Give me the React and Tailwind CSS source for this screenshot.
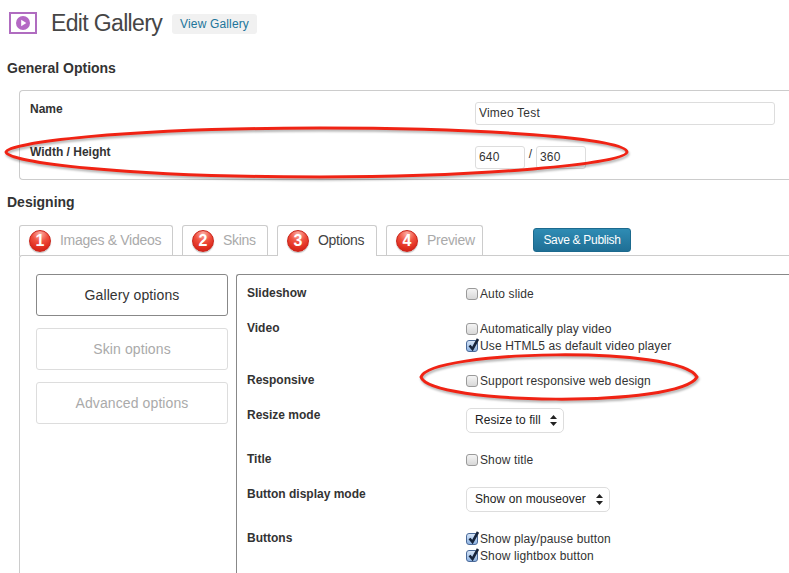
import React from 'react';

const tabs = [
    { n: 1, label: 'Images & Videos', width: 'w-[154px]' },
    { n: 2, label: 'Skins', width: 'w-[86px]' },
    { n: 3, label: 'Options', width: 'w-[100px]', active: true },
    { n: 4, label: 'Preview', width: 'w-[97px]' },
];

function Badge({ n }) {
    return (
        <span className="flex h-[22px] w-[22px] shrink-0 items-center justify-center rounded-full border border-[#c9241a] bg-[radial-gradient(circle_at_50%_15%,#fbb0a6_0%,#f0503f_40%,#dd2a1c_75%,#c8201a_100%)] text-[16px] font-bold text-white shadow-[0_1px_1px_rgba(0,0,0,0.25)]">
            {n}
        </span>
    );
}

function Checkbox({ checked, label }) {
    return (
        <div className="flex h-[17px] items-center text-xs tracking-[0.12px] text-[#333]">
            <span className="relative mr-[2px] h-[12px] w-[12px] shrink-0 rounded-[3px] border border-[#9a9a9a] bg-gradient-to-b from-[#f4f4f4] to-[#d8d8d8] data-[on=true]:border-[#4a6a9a] data-[on=true]:from-[#d5e4f7] data-[on=true]:to-[#8fb4e2]" data-on={checked ? 'true' : 'false'}>
                {checked && (
                    <svg className="absolute -top-[4px] left-0 h-[14px] w-[13px]" viewBox="0 0 13 14">
                        <path d="M2.5 8.5 L5.5 12 L11 2" fill="none" stroke="#16243c" strokeWidth="2.6" />
                    </svg>
                )}
            </span>
            {label}
        </div>
    );
}

function Select({ label, width }) {
    return (
        <div className={`flex h-[25px] items-center justify-between rounded-[5px] border border-[#ddd] pb-px pl-[8px] pr-[6px] text-xs tracking-[0.08px] text-[#222] ${width}`}>
            {label}
            <svg className="h-[11px] w-[7px]" viewBox="0 0 7 11">
                <path d="M3.5 0 L7 4 H0 Z M3.5 11 L0 7 H7 Z" fill="#222" />
            </svg>
        </div>
    );
}

function Row({ label, tall, children }) {
    return (
        <div className={`flex ${tall ? 'h-[27px]' : ''}`}>
            <div className="h-[14px] w-[219px] shrink-0 pt-px text-xs leading-[14px] font-bold text-[#333]">{label}</div>
            <div className={tall ? 'pt-px' : 'pb-px'}>{children}</div>
        </div>
    );
}

function App() {
    return (
        <div className="relative h-[573px] w-[789px] overflow-hidden bg-white font-['Liberation_Sans',Arial,sans-serif]">
            {/* Page title */}
            <div className="flex h-[46px] items-center pl-[9px]">
                <span className="flex h-[22px] w-[28px] items-center justify-center border-[2px] border-[#b06cc0]">
                    <svg className="h-[14px] w-[14px]" viewBox="0 0 14 14">
                        <circle cx="7" cy="7" r="7" fill="#b468c4" />
                        <path d="M5.2 3.8 L10.3 7 L5.2 10.2 Z" fill="#fff" />
                    </svg>
                </span>
                <h1 className="ml-[14px] text-[23px] tracking-[-0.65px] text-[#464646]">Edit Gallery</h1>
                <span className="ml-[10px] mt-[2px] flex h-[20px] items-center rounded-[3px] bg-[#f1f1f1] px-[8px] text-xs tracking-[0.15px] text-[#21759b]">View Gallery</span>
            </div>

            <h2 className="ml-[7px] mt-[14px] h-[16px] text-sm leading-[16px] font-bold text-[#333]">General Options</h2>

            <div className="ml-[19px] mt-[14px] h-[90px] rounded-l-[4px] border-y border-l border-[#ccc] pl-[10px]">
                <div className="flex pt-[11px]">
                    <div className="h-[14px] w-[445px] text-xs leading-[14px] font-bold text-[#333]">Name</div>
                    <input readOnly value="Vimeo Test" className="h-[23px] w-[300px] rounded-[3px] border border-[#ddd] px-[3px] pb-[2px] text-xs tracking-[0.2px] text-[#333]" />
                </div>
                <div className="flex pt-[20px]">
                    <div className="h-[14px] w-[445px] text-xs leading-[14px] font-bold text-[#333]">Width / Height</div>
                    <div className="mt-px flex h-[23px] text-xs tracking-[0.2px] text-[#333]">
                        <input readOnly value="640" className="w-[50px] rounded-[3px] border border-[#ddd] px-[3px] pb-[2px]" />
                        <span className="w-[11px] text-center">/</span>
                        <input readOnly value="360" className="w-[50px] rounded-[3px] border border-[#ddd] px-[3px] pb-[2px]" />
                    </div>
                </div>
            </div>

            <h2 className="ml-[7px] mt-[14px] h-[16px] text-sm leading-[16px] font-bold text-[#333]">Designing</h2>

            {/* Tabs */}
            <div className="ml-[19px] mt-[15px] flex h-[31px] items-start">
                {tabs.map((tab) => (
                    <div
                        key={tab.n}
                        className={`mr-[9px] flex h-[31px] items-center rounded-t-[3px] border-x border-t border-[#ccc] pl-[9px] text-sm ${tab.width} ${tab.active ? 'relative z-10 bg-white text-[#444]' : 'text-[#aaa]'}`}
                    >
                        <Badge n={tab.n} />
                        <span className="-mt-[2px] ml-[9px] tracking-[-0.3px]">{tab.label}</span>
                    </div>
                ))}
                <button className="ml-[41px] mt-[3px] h-[24px] w-[98px] rounded-[3px] border border-[#1c6a8e] bg-gradient-to-b from-[#2f8cb4] to-[#1f6f95] text-xs font-medium tracking-[-0.3px] text-white">
                    Save &amp; Publish
                </button>
            </div>

            {/* Tab content */}
            <div className="-mt-px ml-[19px] flex h-[400px] rounded-tl-[3px] border-l border-t border-[#ccc] pl-[16px] pt-[18px]">
                <div className="flex w-[192px] shrink-0 flex-col gap-[12px] tracking-[0.1px]">
                    <div className="flex h-[42px] items-center justify-center rounded-[3px] border border-[#888] text-sm text-[#333]">Gallery options</div>
                    <div className="flex h-[42px] items-center justify-center rounded-[3px] border border-[#ddd] text-sm text-[#aaa]">Skin options</div>
                    <div className="flex h-[42px] items-center justify-center rounded-[3px] border border-[#ddd] text-sm text-[#aaa]">Advanced options</div>
                </div>
                <div className="ml-[8px] flex flex-1 flex-col gap-[17px] rounded-tl-[3px] border-l border-t border-[#888] pl-[10px] pt-[10px]">
                    <Row label="Slideshow">
                        <Checkbox label="Auto slide" />
                    </Row>
                    <Row label="Video">
                        <Checkbox label="Automatically play video" />
                        <Checkbox checked label="Use HTML5 as default video player" />
                    </Row>
                    <Row label="Responsive">
                        <Checkbox label="Support responsive web design" />
                    </Row>
                    <Row label="Resize mode" tall>
                        <Select label="Resize to fill" width="w-[98px]" />
                    </Row>
                    <Row label="Title">
                        <Checkbox label="Show title" />
                    </Row>
                    <Row label="Button display mode" tall>
                        <Select label="Show on mouseover" width="w-[144px]" />
                    </Row>
                    <Row label="Buttons">
                        <Checkbox checked label="Show play/pause button" />
                        <Checkbox checked label="Show lightbox button" />
                    </Row>
                </div>
            </div>

            {/* Red marker annotations */}
            <svg className="pointer-events-none absolute inset-0 z-20 h-[573px] w-[789px] drop-shadow-[1px_2px_1px_rgba(0,0,0,0.3)]" viewBox="0 0 789 573">
                <path d="M6 152 C8 143 120 128 320 128 C480 128 626 138 627 152 C626 164 480 177 320 177 C120 177 8 162 6 152 Z" fill="none" stroke="#f02314" strokeWidth="3" />
                <path d="M421 377 C430 350 680 345 697 377 C680 408 430 405 421 377 Z" fill="none" stroke="#f02314" strokeWidth="3" strokeLinejoin="round" />
            </svg>
        </div>
    );
}

export default App;
